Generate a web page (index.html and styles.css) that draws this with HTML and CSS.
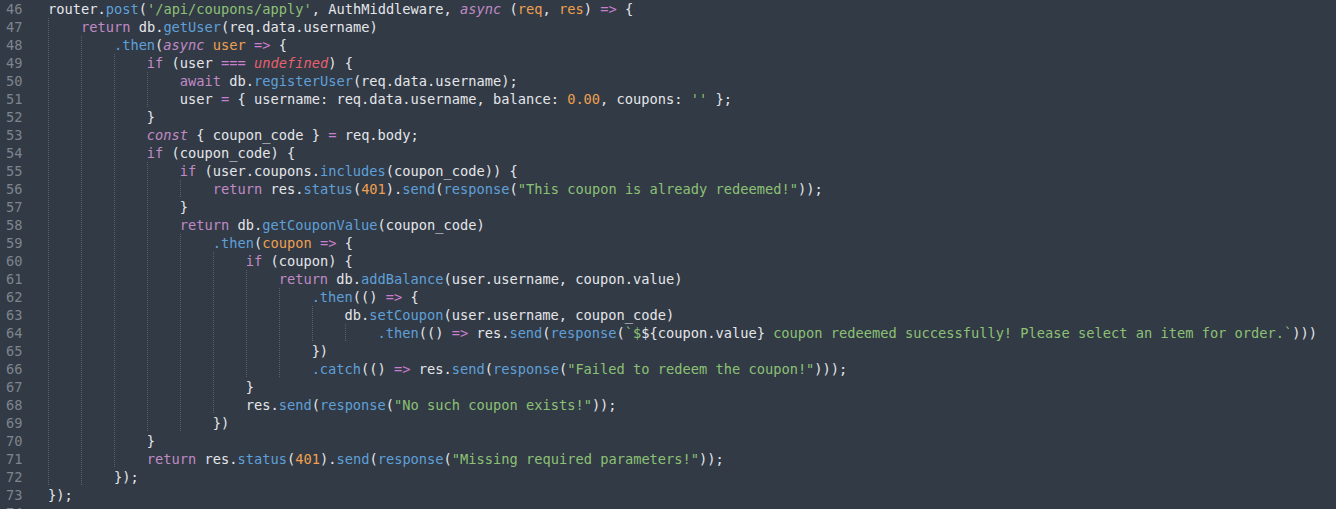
FILE: index.html
```html
<!DOCTYPE html>
<html>
<head>
<meta charset="utf-8">
<link rel="stylesheet" href="styles.css">
</head>
<body>
<div class="editor">
<div class="ln"><span class="num">46</span><span class="code">router.<span class="f">post</span>(<span class="s">'/api/coupons/apply'</span>, AuthMiddleware, <span class="k i">async</span> (<span class="p">req</span>, <span class="p">res</span>) <span class="o">=&gt;</span> {</span></div>
<div class="ln"><span class="num">47</span><span class="code"><span class="ig"></span><span class="k">return</span> db.<span class="f">getUser</span>(req.data.username)</span></div>
<div class="ln"><span class="num">48</span><span class="code"><span class="ig"></span><span class="ig"></span><span class="f">.then</span>(<span class="k i">async</span> <span class="p">user</span> <span class="o">=&gt;</span> {</span></div>
<div class="ln"><span class="num">49</span><span class="code"><span class="ig"></span><span class="ig"></span><span class="ig"></span><span class="k">if</span> (user <span class="o">===</span> <span class="u">undefined</span>) {</span></div>
<div class="ln"><span class="num">50</span><span class="code"><span class="ig"></span><span class="ig"></span><span class="ig"></span><span class="ig"></span><span class="k">await</span> db.<span class="f">registerUser</span>(req.data.username);</span></div>
<div class="ln"><span class="num">51</span><span class="code"><span class="ig"></span><span class="ig"></span><span class="ig"></span><span class="ig"></span>user <span class="o">=</span> { username: req.data.username, balance: <span class="n">0.00</span>, coupons: <span class="s">''</span> };</span></div>
<div class="ln"><span class="num">52</span><span class="code"><span class="ig"></span><span class="ig"></span><span class="ig"></span>}</span></div>
<div class="ln"><span class="num">53</span><span class="code"><span class="ig"></span><span class="ig"></span><span class="ig"></span><span class="k i">const</span> { coupon_code } <span class="o">=</span> req.body;</span></div>
<div class="ln"><span class="num">54</span><span class="code"><span class="ig"></span><span class="ig"></span><span class="ig"></span><span class="k">if</span> (coupon_code) {</span></div>
<div class="ln"><span class="num">55</span><span class="code"><span class="ig"></span><span class="ig"></span><span class="ig"></span><span class="ig"></span><span class="k">if</span> (user.coupons.<span class="f">includes</span>(coupon_code)) {</span></div>
<div class="ln"><span class="num">56</span><span class="code"><span class="ig"></span><span class="ig"></span><span class="ig"></span><span class="ig"></span><span class="ig"></span><span class="k">return</span> res.<span class="f">status</span>(<span class="n">401</span>).<span class="f">send</span>(<span class="f">response</span>(<span class="s">"This coupon is already redeemed!"</span>));</span></div>
<div class="ln"><span class="num">57</span><span class="code"><span class="ig"></span><span class="ig"></span><span class="ig"></span><span class="ig"></span>}</span></div>
<div class="ln"><span class="num">58</span><span class="code"><span class="ig"></span><span class="ig"></span><span class="ig"></span><span class="ig"></span><span class="k">return</span> db.<span class="f">getCouponValue</span>(coupon_code)</span></div>
<div class="ln"><span class="num">59</span><span class="code"><span class="ig"></span><span class="ig"></span><span class="ig"></span><span class="ig"></span><span class="ig"></span><span class="f">.then</span>(<span class="p">coupon</span> <span class="o">=&gt;</span> {</span></div>
<div class="ln"><span class="num">60</span><span class="code"><span class="ig"></span><span class="ig"></span><span class="ig"></span><span class="ig"></span><span class="ig"></span><span class="ig"></span><span class="k">if</span> (coupon) {</span></div>
<div class="ln"><span class="num">61</span><span class="code"><span class="ig"></span><span class="ig"></span><span class="ig"></span><span class="ig"></span><span class="ig"></span><span class="ig"></span><span class="ig"></span><span class="k">return</span> db.<span class="f">addBalance</span>(user.username, coupon.value)</span></div>
<div class="ln"><span class="num">62</span><span class="code"><span class="ig"></span><span class="ig"></span><span class="ig"></span><span class="ig"></span><span class="ig"></span><span class="ig"></span><span class="ig"></span><span class="ig"></span><span class="f">.then</span>(() <span class="o">=&gt;</span> {</span></div>
<div class="ln"><span class="num">63</span><span class="code"><span class="ig"></span><span class="ig"></span><span class="ig"></span><span class="ig"></span><span class="ig"></span><span class="ig"></span><span class="ig"></span><span class="ig"></span><span class="ig"></span>db.<span class="f">setCoupon</span>(user.username, coupon_code)</span></div>
<div class="ln"><span class="num">64</span><span class="code"><span class="ig"></span><span class="ig"></span><span class="ig"></span><span class="ig"></span><span class="ig"></span><span class="ig"></span><span class="ig"></span><span class="ig"></span><span class="ig"></span><span class="ig"></span><span class="f">.then</span>(() <span class="o">=&gt;</span> res.<span class="f">send</span>(<span class="f">response</span>(<span class="s">`$</span>${coupon.value}<span class="s"> coupon redeemed successfully! Please select an item for order.`</span>)))</span></div>
<div class="ln"><span class="num">65</span><span class="code"><span class="ig"></span><span class="ig"></span><span class="ig"></span><span class="ig"></span><span class="ig"></span><span class="ig"></span><span class="ig"></span><span class="ig"></span>})</span></div>
<div class="ln"><span class="num">66</span><span class="code"><span class="ig"></span><span class="ig"></span><span class="ig"></span><span class="ig"></span><span class="ig"></span><span class="ig"></span><span class="ig"></span><span class="ig"></span><span class="f">.catch</span>(() <span class="o">=&gt;</span> res.<span class="f">send</span>(<span class="f">response</span>(<span class="s">"Failed to redeem the coupon!"</span>)));</span></div>
<div class="ln"><span class="num">67</span><span class="code"><span class="ig"></span><span class="ig"></span><span class="ig"></span><span class="ig"></span><span class="ig"></span><span class="ig"></span>}</span></div>
<div class="ln"><span class="num">68</span><span class="code"><span class="ig"></span><span class="ig"></span><span class="ig"></span><span class="ig"></span><span class="ig"></span><span class="ig"></span>res.<span class="f">send</span>(<span class="f">response</span>(<span class="s">"No such coupon exists!"</span>));</span></div>
<div class="ln"><span class="num">69</span><span class="code"><span class="ig"></span><span class="ig"></span><span class="ig"></span><span class="ig"></span><span class="ig"></span>})</span></div>
<div class="ln"><span class="num">70</span><span class="code"><span class="ig"></span><span class="ig"></span><span class="ig"></span>}</span></div>
<div class="ln"><span class="num">71</span><span class="code"><span class="ig"></span><span class="ig"></span><span class="ig"></span><span class="k">return</span> res.<span class="f">status</span>(<span class="n">401</span>).<span class="f">send</span>(<span class="f">response</span>(<span class="s">"Missing required parameters!"</span>));</span></div>
<div class="ln"><span class="num">72</span><span class="code"><span class="ig"></span><span class="ig"></span>});</span></div>
<div class="ln"><span class="num">73</span><span class="code">});</span></div>
<div class="ln"><span class="num">74</span><span class="code"></span></div>
</div>
</body>
</html>
```
FILE: styles.css
```css
html, body {
  margin: 0;
  padding: 0;
  background: #323a45;
  overflow: hidden;
}
.editor {
  font-family: "DejaVu Sans Mono", "Liberation Mono", monospace;
  font-size: 13.7px;
  color: #e4e6ea;
  background: #323a45;
  min-height: 509px;
}
.ln {
  display: flex;
  height: 18px;
  line-height: 18px;
  white-space: pre;
}
.num {
  width: 42px;
  padding-left: 6px;
  color: #7e858e;
  flex: none;
}
.code {
  display: block;
  white-space: pre;
  line-height: 18px;
  height: 18px;
}
.ig {
  display: inline-block;
  width: 4ch;
  height: 18px;
  vertical-align: top;
  background-image: repeating-linear-gradient(to bottom, #59606a 0 1px, transparent 1px 2px);
  background-repeat: no-repeat;
  background-size: 1px 100%;
  background-position: 0 0;
}
.k { color: #c08ac6; }
.i { font-style: italic; }
.o { color: #c97fd0; }
.f { color: #5fa0d9; }
.s { color: #8cc175; }
.p { color: #eea050; }
.n { color: #eea050; }
.u { color: #e8606e; font-style: italic; }
```
